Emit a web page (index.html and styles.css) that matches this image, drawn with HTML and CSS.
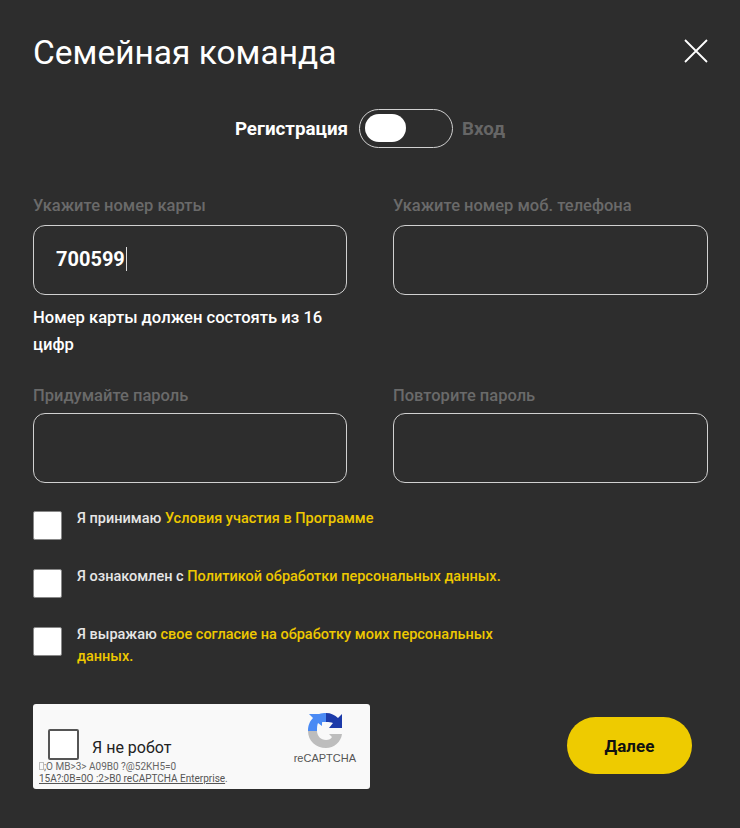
FILE: index.html
```html
<!DOCTYPE html>
<html lang="ru">
<head>
    <meta charset="UTF-8">
    <meta name="viewport" content="width=device-width, initial-scale=1.0">
    <title>Семейная команда</title>
    <link rel="stylesheet" href="styles.css">
</head>
<body>
    <div class="modal">
        <div class="header">
            <h1 class="title">Семейная команда</h1>
            <svg class="close" viewBox="0 0 24 24" width="24" height="24">
                <path d="M1 1 L23 23 M23 1 L1 23" stroke="#fff" stroke-width="1.8" fill="none"/>
            </svg>
        </div>

        <div class="switcher">
            <span class="switch-label active">Регистрация</span>
            <div class="toggle"><div class="knob"></div></div>
            <span class="switch-label">Вход</span>
        </div>

        <div class="fields">
            <div class="field">
                <div class="field-label">Укажите номер карты</div>
                <div class="input"><span class="value">700599</span><span class="caret"></span></div>
                <div class="field-error">Номер карты должен состоять из 16 цифр</div>
            </div>
            <div class="field">
                <div class="field-label">Укажите номер моб. телефона</div>
                <div class="input"></div>
            </div>
            <div class="field">
                <div class="field-label tight">Придумайте пароль</div>
                <div class="input"></div>
            </div>
            <div class="field">
                <div class="field-label tight">Повторите пароль</div>
                <div class="input"></div>
            </div>
        </div>

        <div class="agreements">
            <div class="agreement">
                <div class="checkbox"></div>
                <div class="agreement-text">Я принимаю <a href="#">Условия участия в Программе</a></div>
            </div>
            <div class="agreement">
                <div class="checkbox"></div>
                <div class="agreement-text">Я ознакомлен с <a href="#">Политикой обработки персональных данных.</a></div>
            </div>
            <div class="agreement">
                <div class="checkbox"></div>
                <div class="agreement-text">Я выражаю <a href="#">свое согласие на обработку моих персональных данных.</a></div>
            </div>
        </div>

        <div class="footer">
            <div class="recaptcha">
                <div class="recaptcha-main">
                    <div class="recaptcha-row">
                        <div class="recaptcha-check"></div>
                        <span class="recaptcha-label">Я не робот</span>
                    </div>
                    <div class="recaptcha-note">
                        <span class="tofu"></span>;O MB&gt;3&gt; A09B0 ?@52KH5=0<br>
                        <a href="#">15A?:0B=0O :2&gt;B0 reCAPTCHA Enterprise</a>.
                    </div>
                </div>
                <div class="recaptcha-brand">
                    <svg class="recaptcha-logo" viewBox="0 0 35 35" width="35" height="35">
                        <path d="M0 18 C0 12 2 8 5 5 L1 1 L14 1 L14 13 L10 10 C9 12 9 15 9 18 Z" fill="#4a8af4"/>
                        <path d="M5 5 C9 1 13 0 18 0 L18 9 C14 9 12 9 10 10 Z" fill="#4a8af4"/>
                        <path d="M18 0 C23 0 27 2 30 5 L34 1 L34 15 L21 15 L25 10 C23 9 21 9 18 9 Z" fill="#1c3aa9"/>
                        <path d="M0 18 L9 18 C9 23 13 27 18 27 C21 27 23 26 24 24 L21 21 L34 21 C33 29 26 35 18 35 C8 35 0 28 0 18 Z" fill="#bdbdbd"/>
                    </svg>
                    <span class="recaptcha-name">reCAPTCHA</span>
                </div>
            </div>
            <button class="next">Далее</button>
        </div>
    </div>
</body>
</html>
```

FILE: styles.css
```css
* {
    box-sizing: border-box;
    font-family: 'Roboto', 'Liberation Sans', sans-serif;
}

body {
    margin: 0;
    background-color: #2d2d2d;
}

.modal {
    width: 740px;
    height: 828px;
    padding: 33px 32px 0 33px;
    color: #fff;
}

.header {
    display: flex;
    justify-content: space-between;
    align-items: flex-start;
    height: 76px;
}

.title {
    margin: 0;
    font-size: 33.5px;
    font-weight: 400;
    line-height: 40px;
}

.close {
    margin-top: 6px;
}

.switcher {
    display: flex;
    justify-content: center;
    align-items: center;
    height: 39px;
    margin-right: 1px;
}

.switch-label {
    font-size: 18.8px;
    font-weight: 700;
    color: #666;
}

.switch-label.active {
    color: #fff;
}

.toggle {
    width: 94px;
    height: 39px;
    margin: 0 9px 0 11px;
    padding: 4px 4.5px;
    border: 1.5px solid #d0d0d0;
    border-radius: 20px;
}

.knob {
    width: 41px;
    height: 28px;
    background: #fff;
    border-radius: 14px;
}

.fields {
    display: grid;
    grid-template-columns: 314px 315px;
    column-gap: 46px;
    row-gap: 26px;
    margin-top: 46px;
}

.field-label {
    height: 31px;
    padding-top: 1px;
    font-size: 16.5px;
    line-height: 22px;
    font-weight: 500;
    color: #6a6a6a;
}

.field-label.tight {
    height: 29px;
}

.input {
    display: flex;
    align-items: center;
    height: 70px;
    padding: 0 22px 2px;
    border: 1.5px solid #d0d0d0;
    border-radius: 12px;
}

.value {
    font-size: 20px;
    font-weight: 700;
    color: #fff;
}

.caret {
    width: 1px;
    height: 24px;
    margin-left: 1px;
    background: #ddd;
}

.field-error {
    margin-top: 9px;
    font-size: 16.6px;
    line-height: 27px;
    font-weight: 500;
    color: #fff;
}

.agreements {
    display: flex;
    flex-direction: column;
    gap: 29px;
    margin-top: 28px;
}

.agreement {
    display: flex;
    gap: 15px;
    align-items: flex-start;
    min-height: 29px;
}

.checkbox {
    flex: none;
    width: 29px;
    height: 29px;
    background: #fff;
    border: 1px solid #888;
    border-radius: 2px;
}

.agreement-text {
    width: 430px;
    font-size: 14.5px;
    line-height: 22px;
    font-weight: 500;
    color: #e6e6e6;
    margin-top: -3px;
}

.agreement-text a {
    color: #eec800;
    text-decoration: none;
}

.footer {
    display: flex;
    justify-content: space-between;
    align-items: center;
    margin-top: 36px;
    padding-right: 16px;
}

.recaptcha {
    display: flex;
    justify-content: space-between;
    width: 337px;
    height: 85px;
    background: #f9f9f9;
    border-radius: 3px;
    color: #000;
}

.recaptcha-main {
    padding: 25px 0 0 6px;
}

.recaptcha-row {
    display: flex;
    align-items: center;
    gap: 13px;
    padding-left: 9px;
}

.recaptcha-check {
    width: 31px;
    height: 31px;
    background: #fff;
    border: 2px solid #555;
    border-radius: 2px;
}

.recaptcha-label {
    font-size: 16px;
    color: #222;
    margin-top: 5px;
}

.recaptcha-note {
    margin-top: 1px;
    font-size: 10px;
    line-height: 12px;
    color: #666;
}

.recaptcha-note a {
    color: #555;
}

.tofu {
    display: inline-block;
    width: 5px;
    height: 8px;
    border: 1px solid #bbb;
}

.recaptcha-brand {
    display: flex;
    flex-direction: column;
    align-items: center;
    padding: 9px 14px 0 0;
}

.recaptcha-logo {
    margin-left: 1px;
}

.recaptcha-name {
    margin-top: 4px;
    font-size: 11px;
    line-height: 13px;
    color: #555;
    font-family: 'Liberation Sans', sans-serif;
}

.next {
    width: 125px;
    height: 57px;
    margin-bottom: 2px;
    border: none;
    border-radius: 29px;
    background: #eecb00;
    color: #111;
    font-size: 17px;
    font-weight: 700;
}
```
